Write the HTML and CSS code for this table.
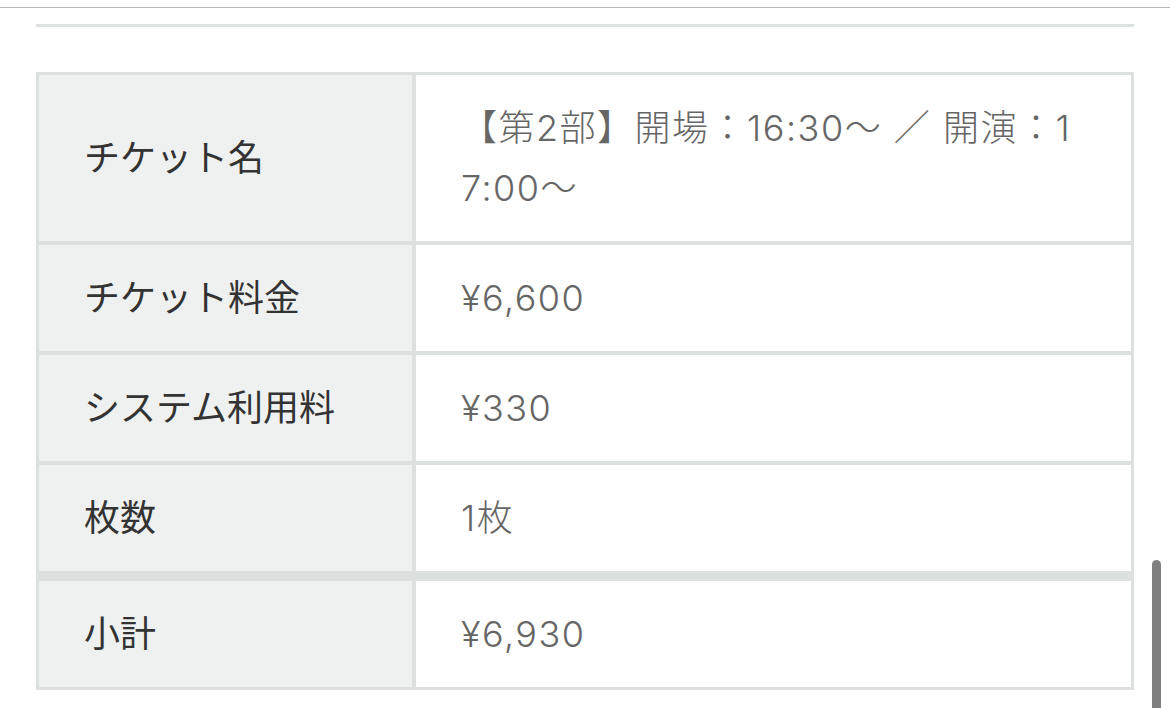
FILE: index.html
```html
<!DOCTYPE html>
<html lang="ja">
<head>
<meta charset="utf-8">
<title>チケット内容</title>
<link rel="stylesheet" href="styles.css">
</head>
<body>
<header class="topbar"></header>
<main class="page">
  <div class="rule"></div>
  <section class="summary">
    <div class="label">チケット名</div>
    <div class="value">【第2部】開場：16:30〜 ／ 開演：17:00〜</div>
    <div class="label">チケット料金</div>
    <div class="value">¥6,600</div>
    <div class="label">システム利用料</div>
    <div class="value">¥330</div>
    <div class="label">枚数</div>
    <div class="value">1枚</div>
    <div class="label total">小計</div>
    <div class="value total">¥6,930</div>
  </section>
</main>
<div class="scrollbar"></div>
</body>
</html>
```

FILE: styles.css
```css
html, body {
  margin: 0;
  padding: 0;
  background: #ffffff;
}

body {
  font-family: Inter, "Noto Sans CJK JP", sans-serif;
}

.topbar {
  height: 7px;
  border-bottom: 1px solid #b5b5b5;
}

.page {
  padding: 16px 36px 40px;
}

.rule {
  height: 3px;
  background: #dde1e0;
}

.summary {
  margin-top: 45px;
  display: grid;
  grid-template-columns: 373px 715px;
  gap: 4px;
  padding: 3px;
  background: #dce0df;
}

.label,
.value {
  font-size: 36px;
  line-height: 60px;
  padding: 23px 45px;
  display: flex;
  align-items: center;
}

.label {
  background: #eff1f1;
  color: #333333;
}

.value {
  background: #ffffff;
  color: #666666;
  font-weight: 300;
  letter-spacing: 1.5px;
  padding-right: 50px;
  word-break: break-all;
}

.total {
  margin-top: 6px;
}

.scrollbar {
  position: fixed;
  top: 560px;
  right: 9px;
  width: 9px;
  height: 148px;
  background: #7f7f7f;
  border-radius: 5px 5px 0 0;
}
```
